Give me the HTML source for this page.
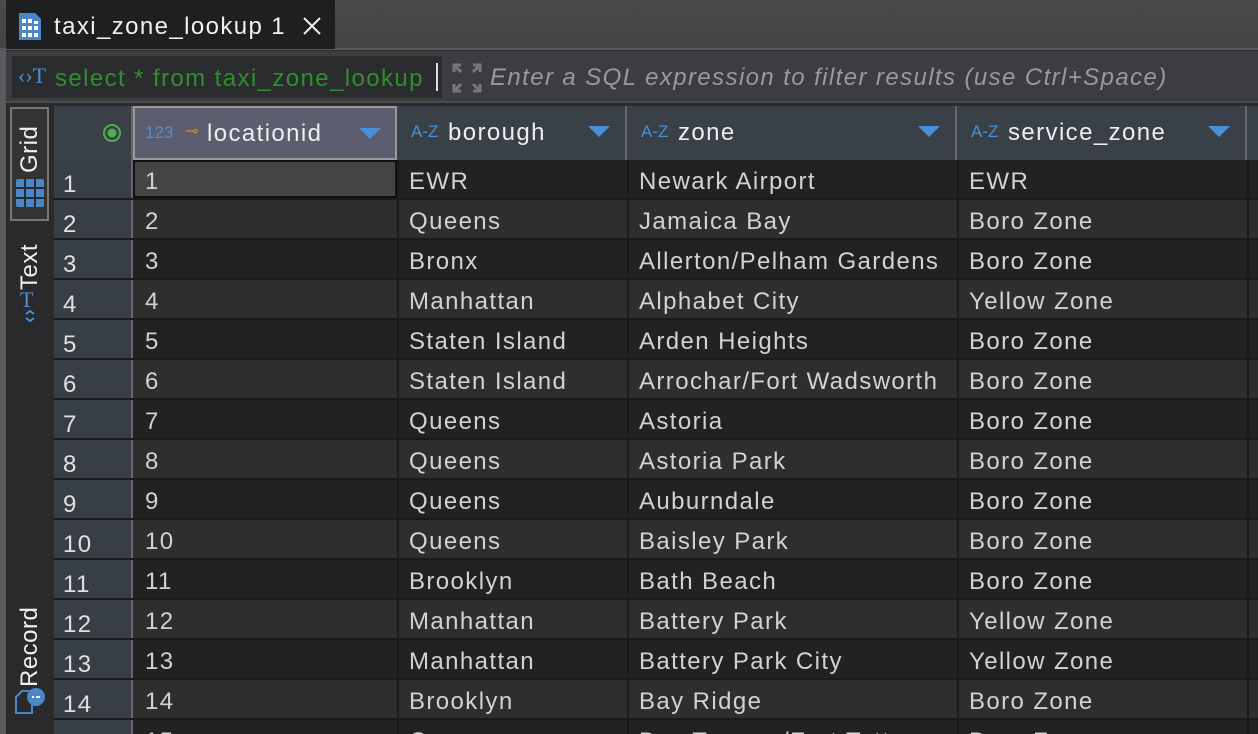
<!DOCTYPE html>
<html><head><meta charset="utf-8"><style>
*{box-sizing:border-box;margin:0;padding:0}
html{width:1258px;height:734px;overflow:hidden}
body{width:1258px;height:734px;overflow:hidden;background:#2b2b2b;font-family:"Liberation Sans",Helvetica,sans-serif;position:relative;color:#d0d0d0;letter-spacing:1.4px}
.abs{position:absolute}
#tabbar{left:0;top:0;width:1258px;height:50px;background:linear-gradient(#4a4a4d,#444447);border-bottom:2px solid #5a5a5c}
#tab{left:6px;top:0;width:329px;height:49px;background:#1e1f21;color:#f0f0f0;font-size:24px}
#filter{left:6px;top:51px;width:1252px;height:52px;background:#3b3d40;border-bottom:2px solid #4a4c4f}
#inp{left:6px;top:5px;width:430px;height:42px;background:#2a2c2e}
#leftstrip{left:0;top:50px;width:6px;height:684px;background:#5b5b5d}
#side{left:6px;top:103px;width:48px;height:631px;background:#2a2a2c;letter-spacing:0.5px}
.row{position:absolute;left:54px;width:1204px;height:40px;font-size:24px;color:#d2d2d2;border-bottom:2px solid #1a1a1a}
.row div{position:absolute;top:8px}
.rn{position:absolute;left:0;top:0!important;width:79px;height:38px;background:#383e46;border-right:2px solid #666;padding:11px 0 0 9px;color:#e0e0e0}
.hdr{position:absolute;top:106px;height:54px;background:#3a4048;border-right:2px solid #666;font-size:24px;color:#eee}
.hdr .t{position:absolute;top:13px}
.az{color:#4a8fd4;font-size:17px;letter-spacing:0}
.tri{position:absolute;top:20px;width:0;height:0;border-left:11px solid transparent;border-right:11px solid transparent;border-top:11px solid #4a90d9}
</style></head><body>
<div id="tabbar" class="abs"></div>
<div id="tab" class="abs">
 <svg class="abs" style="left:11px;top:12px" width="26" height="29" viewBox="0 0 26 29"><path d="M2 1h16l6 6v21H2z" fill="#4a86c8"/><g fill="#fff"><rect x="5" y="7" width="4" height="4"/><rect x="11" y="7" width="4" height="4"/><rect x="17" y="9" width="4" height="3"/><rect x="5" y="14" width="4" height="4"/><rect x="11" y="14" width="4" height="4"/><rect x="17" y="14" width="4" height="4"/><rect x="5" y="21" width="4" height="4"/><rect x="11" y="21" width="4" height="4"/><rect x="17" y="21" width="4" height="4"/></g></svg>
 <span class="abs" style="left:48px;top:13px">taxi_zone_lookup 1</span>
 <svg class="abs" style="left:296px;top:16px" width="20" height="20"><path d="M2 2L18 18M18 2L2 18" stroke="#eee" stroke-width="2"/></svg>
</div>
<div id="leftstrip" class="abs"></div>
<div id="filter" class="abs">
 <div id="inp" class="abs">
  <span class="abs" style="left:6px;top:7px;color:#4a8fd4;font-size:22px;font-family:'Liberation Serif',serif;letter-spacing:0">‹›T</span>
  <span class="abs" style="left:43px;top:9px;color:#2f8f2f;font-size:24px">select * from taxi_zone_lookup</span>
  <div class="abs" style="left:424px;top:7px;width:2px;height:28px;background:#ddd"></div>
 </div>
 <svg class="abs" style="left:446px;top:12px" width="30" height="30"><g stroke="#777" stroke-width="3" fill="none"><path d="M2 9V2h7M2 2l7 7M28 9V2h-7M28 2l-7 7M2 21v7h7M2 28l7-7M28 21v7h-7M28 28l-7-7"/></g></svg>
 <span class="abs" style="left:484px;top:13px;color:#9a9a9a;font-size:24px;font-style:italic">Enter a SQL expression to filter results (use Ctrl+Space)</span>
</div>
<div id="side" class="abs">
 <div class="abs" style="left:4px;top:4px;width:39px;height:114px;border:2px solid #777;background:#333"></div>
 <span class="abs" style="transform:rotate(-90deg);color:#f0f0f0;font-size:24px;width:56px;left:-4px;top:28px">Grid</span>
 <svg class="abs" style="left:9px;top:75px" width="30" height="30"><rect x="1" y="1" width="28" height="28" rx="2" fill="#4a86c8"/><g stroke="#2a2a2c" stroke-width="2"><path d="M10 1v28M20 1v28M1 10h28M1 20h28"/></g></svg>
 <span class="abs" style="left:-6px;top:143px;transform:rotate(-90deg);color:#f0f0f0;font-size:24px;width:60px">Text</span>
 <span class="abs" style="left:14px;top:184px;color:#4a8fd4;font-size:22px;font-family:'Liberation Serif',serif">T</span>
 <svg class="abs" style="left:17px;top:206px" width="14" height="14"><path d="M3 5l4-3 4 3M3 9l4 3 4-3" stroke="#4a8fd4" stroke-width="2" fill="none"/></svg>
 <span class="abs" style="left:-24px;top:522px;transform:rotate(-90deg);color:#f0f0f0;font-size:24px;width:96px">Record</span>
 <svg class="abs" style="left:8px;top:584px" width="32" height="32"><path d="M2 10l6-6h10v22H2z" fill="none" stroke="#4a86c8" stroke-width="2"/><circle cx="22" cy="10" r="9" fill="#4a86c8"/><path d="M18 10h2M22 10h4" stroke="#fff" stroke-width="2"/></svg>
</div>
<div class="hdr" style="left:54px;width:79px;background:#3a4048">
 <svg class="abs" style="left:48px;top:17px" width="20" height="20"><circle cx="10" cy="10" r="8" fill="none" stroke="#4caf50" stroke-width="2"/><circle cx="10" cy="10" r="4.5" fill="#4caf50"/></svg>
</div>
<div class="hdr" style="left:133px;width:264px;background:#5c5d6e;border:2px solid #999">
 <span class="t az" style="left:10px;top:15px">123</span><span class="t" style="left:50px;top:13px;color:#e08a2a;font-size:16px">⊸</span>
 <span class="t" style="left:72px;top:12px">locationid</span><div class="tri" style="left:224px"></div>
</div>
<div class="hdr" style="left:397px;width:230px"><span class="t az" style="left:14px;top:16px">A-Z</span><span class="t" style="left:51px">borough</span><div class="tri" style="left:191px"></div></div>
<div class="hdr" style="left:627px;width:330px"><span class="t az" style="left:14px;top:16px">A-Z</span><span class="t" style="left:51px">zone</span><div class="tri" style="left:291px"></div></div>
<div class="hdr" style="left:957px;width:290px"><span class="t az" style="left:14px;top:16px">A-Z</span><span class="t" style="left:51px">service_zone</span><div class="tri" style="left:251px"></div></div>
<div class="hdr" style="left:1247px;width:11px;border:none"></div>
<div id="rows"></div>
<script>
var d=[["EWR","Newark Airport","EWR"],["Queens","Jamaica Bay","Boro Zone"],["Bronx","Allerton/Pelham Gardens","Boro Zone"],["Manhattan","Alphabet City","Yellow Zone"],["Staten Island","Arden Heights","Boro Zone"],["Staten Island","Arrochar/Fort Wadsworth","Boro Zone"],["Queens","Astoria","Boro Zone"],["Queens","Astoria Park","Boro Zone"],["Queens","Auburndale","Boro Zone"],["Queens","Baisley Park","Boro Zone"],["Brooklyn","Bath Beach","Boro Zone"],["Manhattan","Battery Park","Yellow Zone"],["Manhattan","Battery Park City","Yellow Zone"],["Brooklyn","Bay Ridge","Boro Zone"],["Queens","Bay Terrace/Fort Totten","Boro Zone"]];
var h="";
for(var i=0;i<d.length;i++){var y=160+i*40;var bg=i%2?"#2e2e2e":"#222";
h+='<div class="row" style="top:'+y+'px;background:'+bg+'"><div class="rn">'+(i+1)+'</div>'+
(i==0?'<div style="left:79px;top:0;width:264px;height:38px;background:#444;border:2px solid #111"></div>':'')+
'<div style="left:91px">'+(i+1)+'</div><div style="left:343px;top:0;width:2px;height:40px;background:#1a1a1a"></div><div style="left:355px">'+d[i][0]+'</div><div style="left:573px;top:0;width:2px;height:40px;background:#1a1a1a"></div><div style="left:585px">'+d[i][1]+'</div><div style="left:903px;top:0;width:2px;height:40px;background:#1a1a1a"></div><div style="left:915px">'+d[i][2]+'</div><div style="left:1193px;top:0;width:2px;height:40px;background:#1a1a1a"></div></div>';}
document.getElementById("rows").innerHTML=h;
</script>
</body></html>
